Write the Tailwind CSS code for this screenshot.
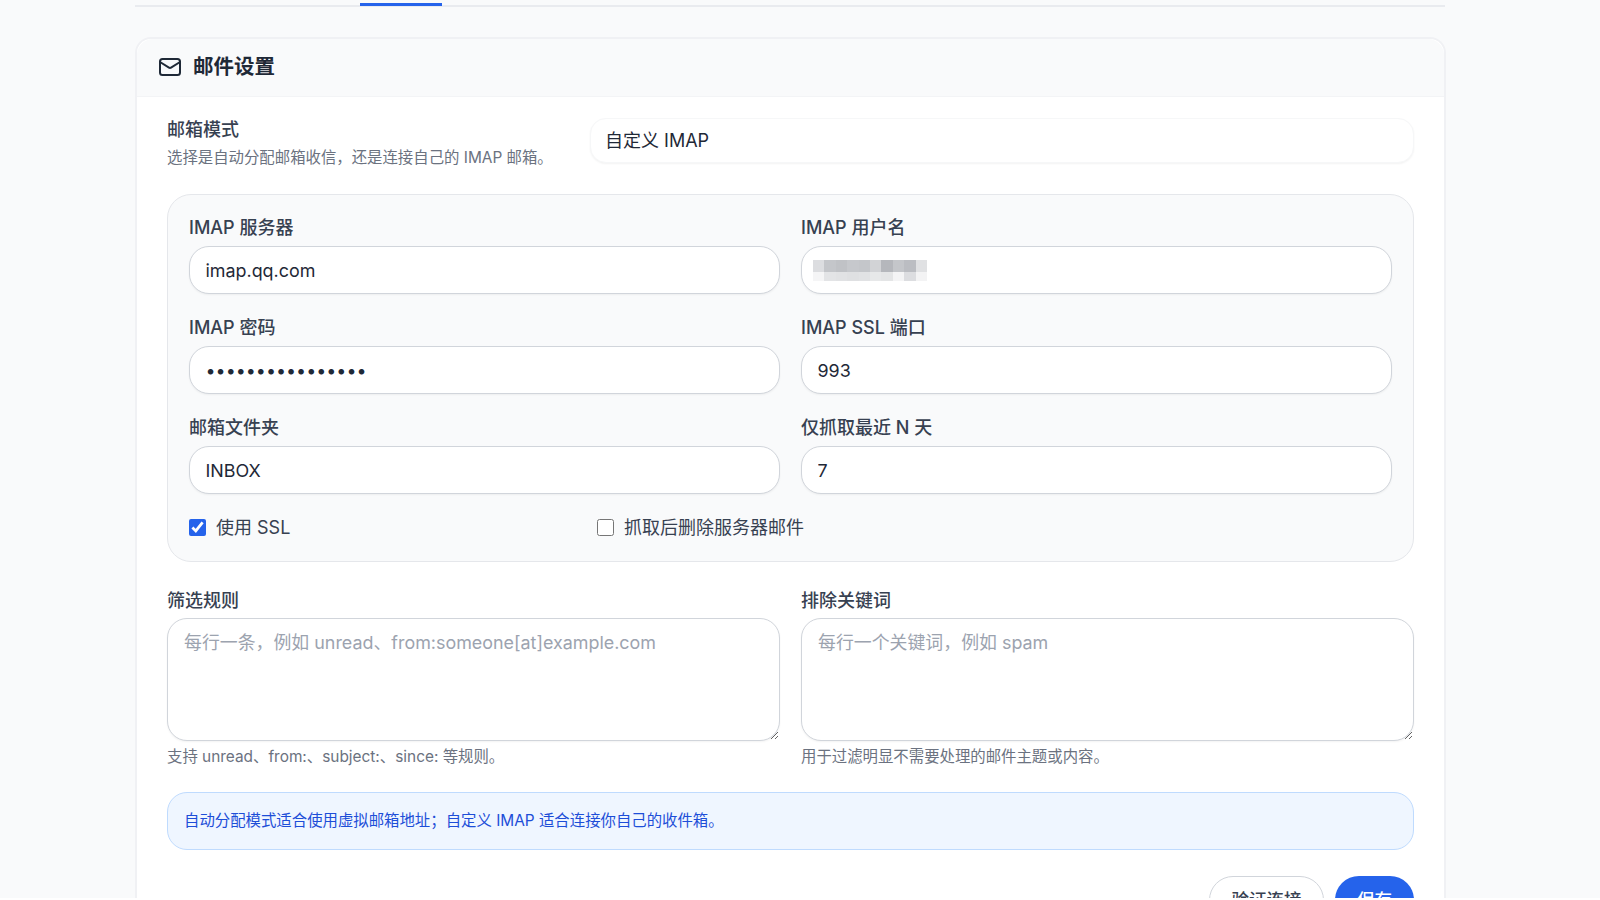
<!DOCTYPE html>
<html lang="zh-CN">
<head>
<meta charset="utf-8">
<script src="https://cdn.jsdelivr.net/npm/@tailwindcss/browser@4"></script>
</head>
<body class="bg-white">
<div class="h-[898px] overflow-hidden bg-[#f9fafb] font-['Inter','Noto_Sans_CJK_SC',sans-serif] text-[#1f2937]">
  <div class="ml-[135px] h-[7px] w-[1310px] border-b-2 border-[#e9ebef] pl-[225px]">
    <div class="h-[6px] w-[82px] border-b-[3px] border-[#2563eb]"></div>
  </div>
  <section class="mt-[30px] ml-[135px] w-[1311px] rounded-t-[16px] border-x-2 border-t-2 border-[#f0f1f4] bg-white">
    <header class="flex h-[58px] items-center gap-[11px] rounded-t-[16px] border-b border-[#f3f4f6] bg-[#f9fafb] pb-[1px] pl-[21px]">
      <svg class="h-[24px] w-[24px] text-[#1f2937]" viewBox="0 0 24 24" fill="none" stroke="currentColor" stroke-width="2" stroke-linecap="round" stroke-linejoin="round"><rect x="2" y="4" width="20" height="16" rx="2.5"/><path d="m22 7-8.97 5.7a1.94 1.94 0 0 1-2.06 0L2 7"/></svg>
      <h2 class="text-[20.5px] leading-[28px] font-semibold">邮件设置</h2>
    </header>
    <div class="px-[30px] pt-[20px]">
      <div class="flex h-[77px] items-start">
        <div class="w-[423px]">
          <div class="text-[18px] leading-[26px] font-medium text-[#374151]">邮箱模式</div>
          <p class="mt-[4px] text-[15.4px] leading-[22px] text-[#6b7280]">选择是自动分配邮箱收信，还是连接自己的 IMAP 邮箱。</p>
        </div>
        <div class="mt-[1px] flex h-[45px] flex-1 items-center rounded-[16px] border border-[#f6f7f8] bg-white pl-[14px] text-[18px] text-[#1f2937] shadow-xs">自定义 IMAP</div>
      </div>
      <div class="h-[368px] rounded-[24px] border border-[#e5e7eb] bg-[#f9fafb] px-[21px] pt-[20px]">
        <div class="grid grid-cols-2 gap-x-[21px] gap-y-[21px]">
          <label class="block">
            <span class="block h-[31px] text-[18px] leading-[26px] font-medium text-[#374151]">IMAP 服务器</span>
            <input class="block h-[48px] w-full rounded-[20px] border border-[#d1d5db] bg-white px-[15.5px] text-[17.9px] text-[#1f2937] shadow-xs outline-none" value="imap.qq.com">
          </label>
          <label class="block">
            <span class="block h-[31px] text-[18px] leading-[26px] font-medium text-[#374151]">IMAP 用户名</span>
            <div class="relative">
              <input class="block h-[48px] w-full rounded-[20px] border border-[#d1d5db] bg-white px-[15.5px] text-[17.9px] text-[#1f2937] shadow-xs outline-none" value="">
              <div class="absolute top-[14px] left-[12px] grid w-[114px] grid-cols-[repeat(10,1fr)] grid-rows-[12px_9px] blur-[0.7px]">
                <i class="bg-[#dcdde0]"></i><i class="bg-[#c4c6ca]"></i><i class="bg-[#c0c2c6]"></i><i class="bg-[#c6c8cc]"></i><i class="bg-[#c4c6ca]"></i><i class="bg-[#d2d3d6]"></i><i class="bg-[#b5b7bc]"></i><i class="bg-[#c4c6ca]"></i><i class="bg-[#bbbdc2]"></i><i class="bg-[#e0e1e3]"></i>
                <i class="bg-[#f5f5f6]"></i><i class="bg-[#e3e4e6]"></i><i class="bg-[#e1e2e4]"></i><i class="bg-[#dfe0e2]"></i><i class="bg-[#e1e2e4]"></i><i class="bg-[#e7e8e9]"></i><i class="bg-[#e4e5e6]"></i><i class="bg-[#f4f4f5]"></i><i class="bg-[#dcdde0]"></i><i class="bg-[#f3f3f4]"></i>
              </div>
            </div>
          </label>
          <label class="block">
            <span class="block h-[31px] text-[18px] leading-[26px] font-medium text-[#374151]">IMAP 密码</span>
            <input type="password" class="block h-[48px] w-full rounded-[20px] border border-[#d1d5db] bg-white px-[15.5px] text-[17.9px] text-[#1f2937] shadow-xs outline-none" value="aaaaaaaaaaaaaaaa">
          </label>
          <label class="block">
            <span class="block h-[31px] text-[18px] leading-[26px] font-medium text-[#374151]">IMAP SSL 端口</span>
            <input class="block h-[48px] w-full rounded-[20px] border border-[#d1d5db] bg-white px-[15.5px] text-[17.9px] text-[#1f2937] shadow-xs outline-none" value="993">
          </label>
          <label class="block">
            <span class="block h-[31px] text-[18px] leading-[26px] font-medium text-[#374151]">邮箱文件夹</span>
            <input class="block h-[48px] w-full rounded-[20px] border border-[#d1d5db] bg-white px-[15.5px] text-[17.9px] text-[#1f2937] shadow-xs outline-none" value="INBOX">
          </label>
          <label class="block">
            <span class="block h-[31px] text-[18px] leading-[26px] font-medium text-[#374151]">仅抓取最近 N 天</span>
            <input class="block h-[48px] w-full rounded-[20px] border border-[#d1d5db] bg-white px-[15.5px] text-[17.9px] text-[#1f2937] shadow-xs outline-none" value="7">
          </label>
        </div>
        <div class="mt-[20px] flex h-[26px] items-center text-[18px] text-[#374151]">
          <label class="flex w-[408px] items-center gap-[10px]"><input type="checkbox" checked class="h-[17px] w-[17px] accent-[#2563eb]"><span>使用 SSL</span></label>
          <label class="flex items-center gap-[10px]"><input type="checkbox" class="h-[17px] w-[17px] accent-[#2563eb]"><span>抓取后删除服务器邮件</span></label>
        </div>
      </div>
      <div class="mt-[26px] grid grid-cols-2 gap-x-[21px]">
        <label class="block">
          <span class="block h-[30px] text-[18px] leading-[26px] font-medium text-[#374151]">筛选规则</span>
          <textarea class="block h-[123px] w-full rounded-[20px] border border-[#d1d5db] bg-white px-[16px] py-[10px] text-[17.9px] leading-[28px] shadow-xs outline-none placeholder:text-[#9ca3af]" placeholder="每行一条，例如 unread、from:someone[at]example.com"></textarea>
          <span class="mt-[5px] block text-[15.4px] leading-[22px] text-[#6b7280]">支持 unread、from:、subject:、since: 等规则。</span>
        </label>
        <label class="block">
          <span class="block h-[30px] text-[18px] leading-[26px] font-medium text-[#374151]">排除关键词</span>
          <textarea class="block h-[123px] w-full rounded-[20px] border border-[#d1d5db] bg-white px-[16px] py-[10px] text-[17.9px] leading-[28px] shadow-xs outline-none placeholder:text-[#9ca3af]" placeholder="每行一个关键词，例如 spam"></textarea>
          <span class="mt-[5px] block text-[15.4px] leading-[22px] text-[#6b7280]">用于过滤明显不需要处理的邮件主题或内容。</span>
        </label>
      </div>
      <div class="mt-[24px] flex h-[58px] items-center rounded-[20px] border border-[#bfdbfe] bg-[#eff6ff] pl-[16px] text-[15.4px] text-[#1d4ed8]">自动分配模式适合使用虚拟邮箱地址；自定义 IMAP 适合连接你自己的收件箱。</div>
      <div class="mt-[26px] flex justify-end gap-[11px]">
        <button class="h-[48px] w-[115px] rounded-[24px] border border-[#d1d5db] bg-white text-[17.5px] font-medium text-[#374151]">验证连接</button>
        <button class="h-[48px] w-[79px] rounded-[24px] bg-[#2563eb] text-[17.5px] font-medium text-white">保存</button>
      </div>
    </div>
  </section>
</div>
</body>
</html>
